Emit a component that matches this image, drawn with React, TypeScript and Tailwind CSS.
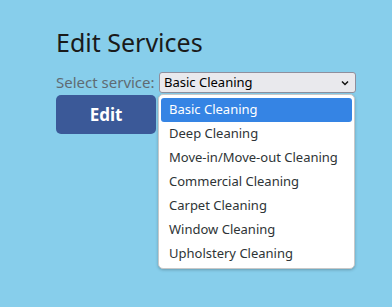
import React from "react";

const items = [
  "Basic Cleaning",
  "Deep Cleaning",
  "Move-in/Move-out Cleaning",
  "Commercial Cleaning",
  "Carpet Cleaning",
  "Window Cleaning",
  "Upholstery Cleaning",
];

export default function App() {
  return (
    <div className="w-[392px] h-[307px] bg-[#87ceeb] overflow-hidden pl-[56px] pt-[26px] font-['Noto_Sans',sans-serif]">
      <h1 className="text-[25px] leading-[32px] text-[#1a1a1a] font-normal m-0">Edit Services</h1>
      <div className="mt-[14px] flex items-center h-[21px]">
        <span className="text-[15px] text-[#5f6b73] w-[103px] shrink-0">Select service:</span>
        <div className="w-[197px] h-[21px] border border-[#8f8f9d] rounded-[3px] bg-[#e9e9ed] flex items-center px-[4px] text-[13px] text-black justify-between">
          <span>Basic Cleaning</span>
          <svg width="10" height="10" viewBox="0 0 10 10" className="mr-[1px]">
            <path d="M2 3.5 L5 6.5 L8 3.5" fill="none" stroke="#111" strokeWidth="1.5" />
          </svg>
        </div>
      </div>
      <div className="flex items-start mt-[1px] gap-[2px]">
        <div className="w-[100px] h-[39px] mt-[1px] bg-[#3b5998] rounded-[5px] flex items-center justify-center text-white font-bold text-[17px]">Edit</div>
        <div className="w-[197px] bg-white rounded-[5px] border border-[#c8c8c8] shadow-[0_1px_3px_rgba(0,0,0,0.25)] pt-[3px] pb-[2px] px-[2px] flex flex-col">
          {items.map((t, i) => (
            <div
              key={t}
              className={
                i === 0
                  ? "h-[24px] shrink-0 flex items-center pl-[8px] text-[13px] rounded-[3px] bg-[#3584e4] text-white"
                  : "h-[24px] shrink-0 flex items-center pl-[8px] text-[13px] rounded-[3px] text-[#2e3436]"
              }
            >
              {t}
            </div>
          ))}
        </div>
      </div>
    </div>
  );
}
